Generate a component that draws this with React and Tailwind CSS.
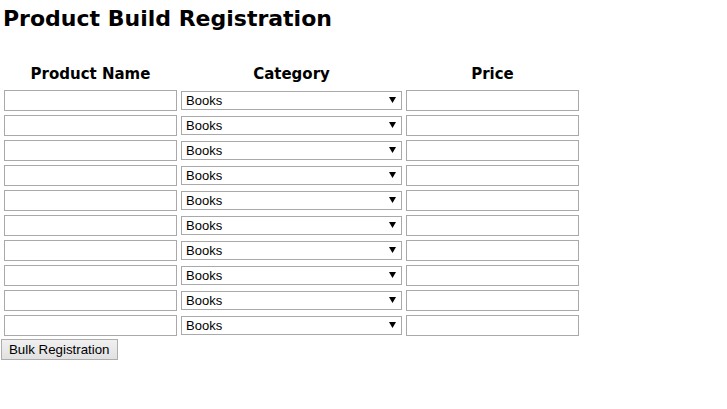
import { useState } from "react";

const ROWS = Array.from({ length: 10 }, () => ({ name: "", category: "Books", price: "" }));
const CATEGORIES = ["Books", "Electronics", "Clothing", "Food"];

export default function App() {
  const [rows, setRows] = useState(ROWS);

  const update = (idx, key, value) =>
    setRows((prev) => prev.map((r, i) => (i === idx ? { ...r, [key]: value } : r)));

  return (
    <div className="bg-white text-black min-h-[409px] font-['Liberation_Sans',Arial,sans-serif]">
      <h1 className="pl-[3px] pt-[6px] text-[22px] leading-[26px] font-bold font-['DejaVu_Sans',Verdana,sans-serif]">
        Product Build Registration
      </h1>

      <div className="mt-[32px] pl-[4px]">
        <div className="grid grid-cols-[173px_221px_173px] gap-x-[4px] text-[15px] leading-[20px] font-bold font-['DejaVu_Sans',Verdana,sans-serif] text-center">
          <div>Product Name</div>
          <div>Category</div>
          <div>Price</div>
        </div>

        <div className="mt-[6px] flex flex-col gap-[4px]">
          {rows.map((row, idx) => (
            <div key={idx} className="grid grid-cols-[173px_221px_173px] items-start gap-x-[4px] h-[21px]">
              <input
                type="text"
                value={row.name}
                onChange={(e) => update(idx, "name", e.target.value)}
                className="block h-[21px] w-[173px] border border-[#a9a9a9] bg-white px-[2px] text-[13px] outline-none"
              />
              <div className="relative mt-[1px] h-[19px]">
                <select
                  value={row.category}
                  onChange={(e) => update(idx, "category", e.target.value)}
                  className="block h-[19px] w-full appearance-none border border-[#a9a9a9] bg-white pl-[4px] text-[13px] leading-[17px] outline-none"
                >
                  {CATEGORIES.map((c) => (
                    <option key={c}>{c}</option>
                  ))}
                </select>
                <svg className="pointer-events-none absolute right-[6px] top-[6px]" width="7" height="6" viewBox="0 0 7 6">
                  <polygon points="0,0 7,0 3.5,6" fill="#000" />
                </svg>
              </div>
              <input
                type="text"
                value={row.price}
                onChange={(e) => update(idx, "price", e.target.value)}
                className="block h-[21px] w-[173px] border border-[#a9a9a9] bg-white px-[2px] text-[13px] outline-none"
              />
            </div>
          ))}
        </div>
      </div>

      <button
        type="button"
        className="ml-[1px] mt-[3px] block h-[21px] border border-[#adadad] bg-gradient-to-b from-[#f0f0f0] to-[#e1e1e1] px-[7px] text-[13.3px] leading-[18px]"
      >
        Bulk Registration
      </button>
    </div>
  );
}
